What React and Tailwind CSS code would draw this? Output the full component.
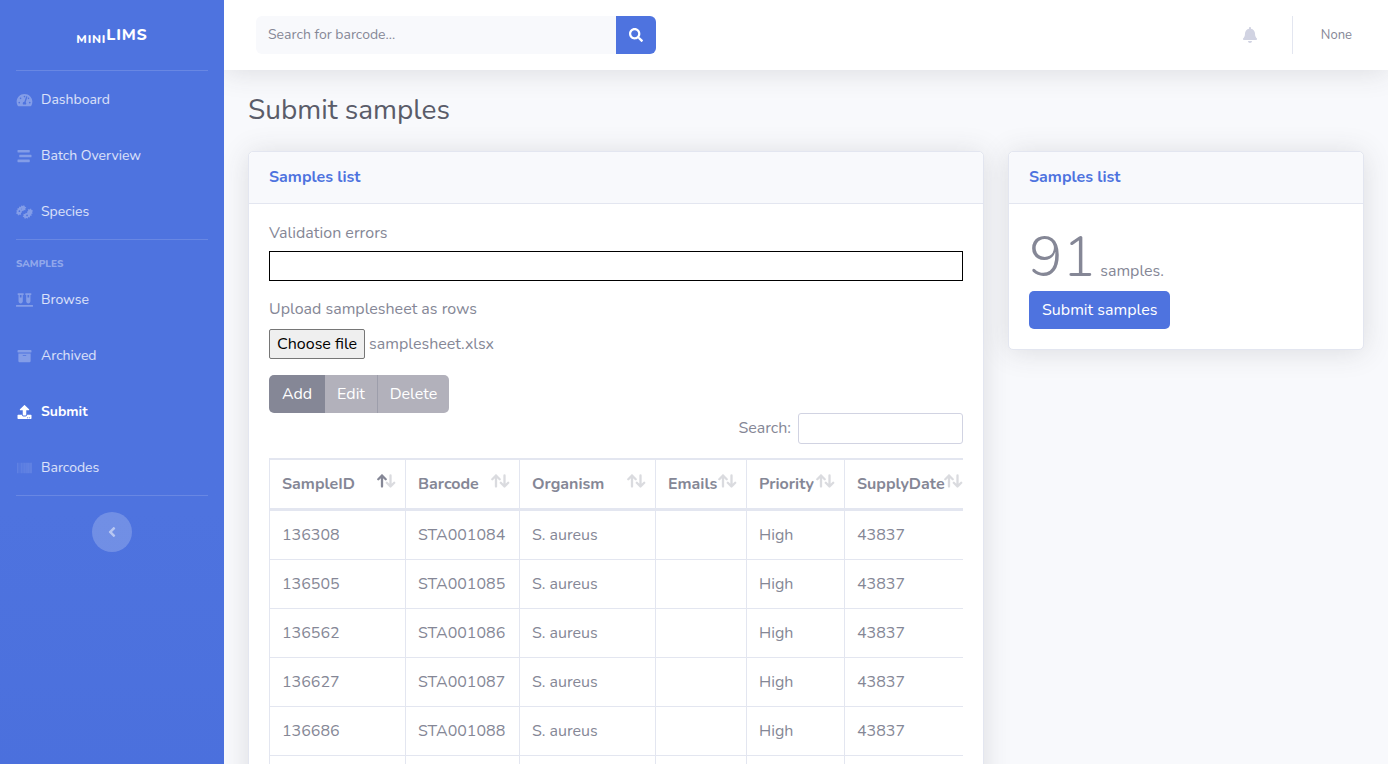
import { useState } from "react";
import {
  FaTachometerAlt,
  FaStream,
  FaBacteria,
  FaVials,
  FaArchive,
  FaUpload,
  FaBarcode,
  FaAngleLeft,
  FaSearch,
  FaBell,
} from "react-icons/fa";

const columns = [
  { name: "SampleID", width: "w-[136px]", sorted: true },
  { name: "Barcode", width: "w-[114px]" },
  { name: "Organism", width: "w-[136px]" },
  { name: "Emails", width: "w-[91px]" },
  { name: "Priority", width: "w-[98px]" },
  { name: "SupplyDate", width: "w-[128px]" },
];

const rows = [
  ["136308", "STA001084", "S. aureus", "", "High", "43837"],
  ["136505", "STA001085", "S. aureus", "", "High", "43837"],
  ["136562", "STA001086", "S. aureus", "", "High", "43837"],
  ["136627", "STA001087", "S. aureus", "", "High", "43837"],
  ["136686", "STA001088", "S. aureus", "", "High", "43837"],
  ["", "", "", "", "", ""],
];

function NavItem({ icon: Icon, label, active, faint }) {
  return (
    <a
      href="#"
      className={
        "flex h-14 items-center gap-2 px-4 pt-0.5 text-[14px] leading-5 " +
        (active ? "font-bold text-white" : "text-white/80")
      }
    >
      <span
        className={
          "flex w-[17px] shrink-0 justify-center [&>svg]:h-[14px] [&>svg]:w-[17px] " +
          (active ? "text-white" : faint ? "text-white/20" : "text-white/30")
        }
      >
        <Icon />
      </span>
      {label}
    </a>
  );
}

function Divider() {
  return <hr className="mx-4 border-0 border-t border-white/15" />;
}

function Sidebar() {
  return (
    <nav className="relative z-10 w-56 shrink-0 bg-linear-to-b from-[#4e73df] from-60% to-[#4a6fdc]">
      <a
        href="#"
        className="flex h-[70px] items-center justify-center font-extrabold tracking-wider text-white"
      >
        <span>
          <sub className="text-[12px]">MINI</sub>
          <span className="text-[16px]">LIMS</span>
        </span>
      </a>
      <Divider />
      <NavItem icon={FaTachometerAlt} label="Dashboard" />
      <NavItem icon={FaStream} label="Batch Overview" />
      <NavItem icon={FaBacteria} label="Species" />
      <Divider />
      <div className="px-4 pt-[17px] text-[10px] leading-[14px] font-extrabold text-white/40">SAMPLES</div>
      <NavItem icon={FaVials} label="Browse" />
      <NavItem icon={FaArchive} label="Archived" />
      <NavItem icon={FaUpload} label="Submit" active />
      <NavItem icon={FaBarcode} label="Barcodes" faint />
      <Divider />
      <div className="flex justify-center pt-4">
        <button
          type="button"
          aria-label="Collapse sidebar"
          className="flex size-10 items-center justify-center rounded-full bg-white/20 text-base text-white/50"
        >
          <FaAngleLeft />
        </button>
      </div>
    </nav>
  );
}

function Topbar() {
  return (
    <header className="flex h-[70px] items-center justify-between bg-white px-8 shadow-[0_2px_28px_0_rgba(58,59,69,0.15)]">
      <form className="flex h-[38px] w-[400px]">
        <input
          type="text"
          aria-label="Search for barcode"
          placeholder="Search for barcode..."
          className="min-w-0 flex-1 rounded-l-md bg-[#f8f9fc] px-3 text-[14px] placeholder:text-[#858796]"
        />
        <button
          type="button"
          aria-label="Search"
          className="flex w-10 items-center justify-center rounded-r-md bg-[#4e73df] text-[14px] text-white"
        >
          <FaSearch />
        </button>
      </form>
      <div className="flex items-center">
        <a href="#" aria-label="Alerts" className="px-[34px] text-[16px] text-[#d1d3e2]">
          <FaBell />
        </a>
        <div className="h-[38px] border-l border-[#e3e6f0]" />
        <a href="#" className="pr-1 pl-7 text-[13px] text-[#858796]">
          None
        </a>
      </div>
    </header>
  );
}

function Card({ title, className, children }) {
  return (
    <section
      className={
        "min-w-0 rounded-[5px] border border-[#e3e6f0] bg-white shadow-[0_2px_28px_0_rgba(58,59,69,0.15)] " +
        className
      }
    >
      <h2 className="rounded-t-[5px] border-b border-[#e3e6f0] bg-[#f8f9fc] px-5 py-[13px] text-base leading-[25px] font-bold text-[#4e73df]">
        {title}
      </h2>
      {children}
    </section>
  );
}

function SortIcon({ ascending }) {
  return (
    <svg
      viewBox="0 0 20 14"
      className="absolute top-[14px] right-[9px] h-[14px] w-5"
      fill="none"
      stroke="#858796"
      strokeWidth="2.3"
      strokeLinecap="round"
      strokeLinejoin="round"
      aria-hidden="true"
    >
      <path d="M14.5 1.5v11M10.8 8.8l3.7 3.7l3.7-3.7" opacity="0.3" />
      <path d="M6 12.5v-11M2.3 5.2l3.7-3.7l3.7 3.7" opacity={ascending ? 1 : 0.3} />
    </svg>
  );
}

function SamplesTable() {
  return (
    <div className="overflow-hidden">
      <table className="w-[703px] table-fixed border-separate border-spacing-0 border-l border-[#e3e6f0]">
        <thead>
          <tr>
            {columns.map((c) => (
              <th
                key={c.name}
                className={
                  "relative h-[53px] border-t-2 border-r border-b-3 border-[#e3e6f0] px-3 text-left font-bold whitespace-nowrap " +
                  c.width
                }
              >
                {c.name}
                <SortIcon ascending={c.sorted} />
              </th>
            ))}
          </tr>
        </thead>
        <tbody>
          {rows.map((row) => (
            <tr key={row[0]}>
              {row.map((cell, i) => (
                <td key={i} className="h-[49px] border-r border-b border-[#e3e6f0] px-3 whitespace-nowrap">
                  {cell}
                </td>
              ))}
            </tr>
          ))}
        </tbody>
      </table>
    </div>
  );
}

function SamplesheetInput() {
  const [fileName, setFileName] = useState("samplesheet.xlsx");
  return (
    <div className="relative mt-2 flex h-[30px] items-center gap-1">
      <input
        id="samplesheet"
        type="file"
        className="peer sr-only"
        onChange={(e) => setFileName(e.target.files[0]?.name ?? "")}
      />
      <label
        htmlFor="samplesheet"
        className="rounded-[2px] border border-[#767676] bg-[#efefef] px-[7px] py-0.5 text-black peer-focus-visible:outline-2"
      >
        Choose file
      </label>
      <span>{fileName}</span>
    </div>
  );
}

export default function App() {
  return (
    <div className="flex min-h-screen bg-[#f8f9fc] font-['Nunito','Open_Sans',sans-serif] text-base leading-6 text-[#858796]">
      <Sidebar />
      <div className="min-w-0 flex-1">
        <Topbar />
        <main className="px-6 py-6">
          <h1 className="mb-6 text-[28px] leading-[33px] text-[#5a5c69]">Submit samples</h1>
          <div className="grid grid-cols-3 items-start gap-6">
            <Card title="Samples list" className="col-span-2">
              <div className="px-5 pt-[17px] pb-5">
                <label htmlFor="errors" className="block">
                  Validation errors
                </label>
                <input
                  id="errors"
                  type="text"
                  readOnly
                  className="mt-1.5 block h-[30px] w-full border border-black px-1"
                />
                <label htmlFor="samplesheet" className="mt-4 block">
                  Upload samplesheet as rows
                </label>
                <SamplesheetInput />
                <div className="mt-4 flex h-[38px] w-fit overflow-hidden rounded-[5px] text-white">
                  <button type="button" className="w-14 bg-[#858796]">
                    Add
                  </button>
                  <button type="button" className="w-[53px] border-r border-[#9d9eab] bg-[#b2b1bb]">
                    Edit
                  </button>
                  <button type="button" className="w-[71px] bg-[#b2b1bb]">
                    Delete
                  </button>
                </div>
                <div className="mb-[14px] flex items-start justify-end gap-[7px]">
                  <label htmlFor="filter" className="leading-[30px]">
                    Search:
                  </label>
                  <input
                    id="filter"
                    type="search"
                    className="h-[31px] w-[165px] rounded-[3px] border border-[#d1d3e2] px-2 text-sm"
                  />
                </div>
                <SamplesTable />
              </div>
            </Card>
            <Card title="Samples list" className="">
              <div className="p-5">
                <p className="flex h-[67px] items-baseline gap-1">
                  <span className="text-[56px] leading-[67px] font-light">91</span>
                  <span>samples.</span>
                </p>
                <button type="button" className="h-[38px] rounded-[5px] bg-[#4e73df] px-[13px] text-white">
                  Submit samples
                </button>
              </div>
            </Card>
          </div>
        </main>
      </div>
    </div>
  );
}
